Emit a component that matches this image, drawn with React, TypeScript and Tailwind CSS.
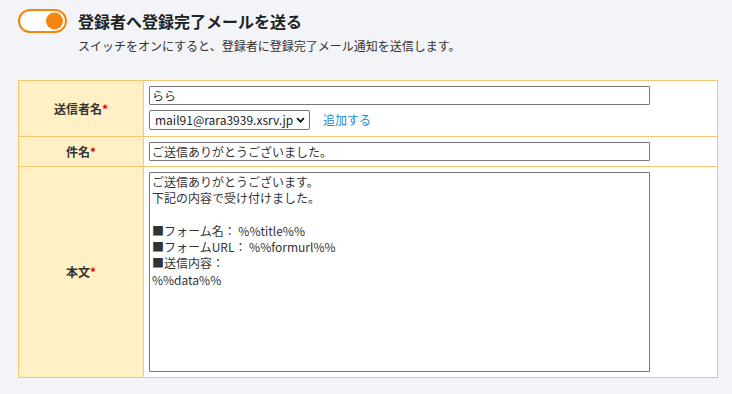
import { useState } from 'react';

const font = { fontFamily: '"Noto Sans CJK JP", "Noto Sans", sans-serif' };

function Toggle({ on, onChange }: { on: boolean; onChange: (v: boolean) => void }) {
  return (
    <button
      type="button"
      onClick={() => onChange(!on)}
      className="relative w-[49px] h-[24px] rounded-full border-[2.5px] border-[#f5850c] bg-white shrink-0"
    >
      <span
        className={`absolute top-1/2 -translate-y-1/2 w-[17px] h-[17px] rounded-full bg-[#f5850c] ${
          on ? 'right-[2px]' : 'left-[2px]'
        }`}
      />
    </button>
  );
}

function Label({ children }: { children: string }) {
  return (
    <div className="bg-[#fff0c6] border-r border-[#f5c772] flex items-center justify-center text-[12px] font-bold text-[#333]">
      {children}
      <span className="text-[#e60012]">*</span>
    </div>
  );
}

export default function App() {
  const [enabled, setEnabled] = useState(true);
  const [senderName, setSenderName] = useState('らら');
  const [subject, setSubject] = useState('ご送信ありがとうございました。');
  const [body, setBody] = useState(
    'ご送信ありがとうございます。\n下記の内容で受け付けました。\n\n■フォーム名： %%title%%\n■フォームURL： %%formurl%%\n■送信内容：\n%%data%%'
  );

  return (
    <div className="min-h-screen bg-[#f3f4f8] px-[18px] pt-[9px] text-[#333]" style={font}>
      {/* Header */}
      <div className="flex items-center gap-[11px]">
        <Toggle on={enabled} onChange={setEnabled} />
        <h2 className="text-[16px] font-bold leading-[24px] text-[#222]">登録者へ登録完了メールを送る</h2>
      </div>
      <p className="ml-[60px] mt-[3px] text-[12px] leading-[20px] text-[#333]">
        スイッチをオンにすると、登録者に登録完了メール通知を送信します。
      </p>

      {/* Settings table */}
      <div className="mt-[24px] w-[700px] border border-[#f5c772] bg-white grid grid-cols-[125px_1fr]">
        <Label>送信者名</Label>
        <div className="px-[5px] pt-[5px] pb-[6px] flex flex-col gap-[5px]">
          <input
            value={senderName}
            onChange={(e) => setSenderName(e.target.value)}
            className="block w-[501px] h-[19px] border border-[#767676] rounded-[1px] px-[2px] text-[12px] leading-[17px] text-[#333] outline-none"
          />
          <div className="flex items-center gap-[13px] h-[20px]">
            <div className="relative h-[20px]">
              <select className="block appearance-none w-[161px] h-[20px] border border-[#767676] rounded-[2px] bg-white pl-[5px] pr-[12px] text-[12px] leading-[18px] py-0 text-[#222] outline-none">
                <option>mail91@rara3939.xsrv.jp</option>
              </select>
              <svg
                viewBox="0 0 10 10"
                className="absolute right-[5px] top-1/2 -translate-y-1/2 w-[9px] h-[9px] pointer-events-none"
              >
                <path d="M1.2 3 L5 6.8 L8.8 3" fill="none" stroke="#111" strokeWidth="2" />
              </svg>
            </div>
            <a href="#" className="text-[12px] leading-[20px] text-[#1d8bd6]">
              追加する
            </a>
          </div>
        </div>

        <div className="col-span-2 border-t border-[#f5c772]" />

        <Label>件名</Label>
        <div className="px-[5px] py-[5px]">
          <input
            value={subject}
            onChange={(e) => setSubject(e.target.value)}
            className="block w-[501px] h-[19px] border border-[#767676] rounded-[1px] px-[2px] text-[12px] leading-[17px] text-[#333] outline-none"
          />
        </div>

        <div className="col-span-2 border-t border-[#f5c772]" />

        <Label>本文</Label>
        <div className="px-[5px] py-[5px]">
          <textarea
            value={body}
            onChange={(e) => setBody(e.target.value)}
            className="block w-[501px] h-[200px] border border-[#767676] rounded-[1px] px-[2px] pt-[1px] text-[12px] leading-[16.3px] text-[#333] resize-none outline-none"
          />
        </div>
      </div>
    </div>
  );
}
